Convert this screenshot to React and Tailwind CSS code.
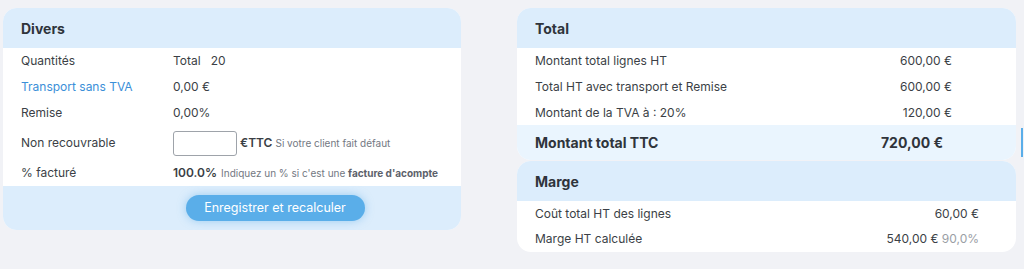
export default function App() {
  const font = { fontFamily: 'Inter, "Noto Sans", sans-serif' };
  return (
    <div className="relative w-[1024px] h-[269px] bg-[#f1f2f6] text-[#3b3f46]" style={font}>
      <div className="flex items-start pt-[8px] pl-[3px] gap-[56px]">
        {/* Divers */}
        <div className="w-[458px] rounded-[14px] overflow-hidden bg-white">
          <div className="h-[40px] bg-[#dcedfc] flex items-center px-[18px] text-[14px] font-bold text-[#2f343b]">Divers</div>
          <div className="flex flex-col text-[12px] px-[18px] whitespace-nowrap">
            <div className="h-[26px] flex items-center">
              <div className="w-[152px]">Quantités</div>
              <div className="flex gap-[10px]"><span>Total</span><span>20</span></div>
            </div>
            <div className="h-[26px] flex items-center">
              <div className="w-[152px] text-[#3b8fd8]">Transport sans TVA</div>
              <div>0,00 €</div>
            </div>
            <div className="h-[26px] flex items-center">
              <div className="w-[152px]">Remise</div>
              <div>0,00%</div>
            </div>
            <div className="h-[34px] flex items-center">
              <div className="w-[152px]">Non recouvrable</div>
              <div className="flex items-center">
                <input className="w-[64px] h-[25px] border border-[#9ea3aa] rounded-[3px] bg-white" />
                <span className="ml-[3px] text-[12px] font-semibold text-[#3b3f46]">€TTC</span>
                <span className="ml-[3px] text-[10px] text-[#737882]">Si votre client fait défaut</span>
              </div>
            </div>
            <div className="h-[26px] flex items-center">
              <div className="w-[152px]">% facturé</div>
              <div className="flex items-center">
                <span className="font-semibold">100.0%</span>
                <span className="ml-[4px] text-[10px] text-[#737882]">Indiquez un % si c'est une <b className="font-bold text-[#5c616a]">facture d'acompte</b></span>
              </div>
            </div>
          </div>
          <div className="h-[44px] bg-[#dcedfc] flex items-center justify-center">
            <button className="w-[179px] h-[26px] rounded-full bg-[#5aaee9] text-white text-[12.5px] shadow-[0_0_8px_rgba(90,174,233,0.5)] ml-[86px]">Enregistrer et recalculer</button>
          </div>
        </div>

        {/* Right column */}
        <div className="w-[499px] flex flex-col gap-[1px]">
          <div className="rounded-[14px] overflow-hidden bg-white">
            <div className="h-[40px] bg-[#dcedfc] flex items-center px-[18px] text-[14px] font-bold text-[#2f343b]">Total</div>
            <div className="flex flex-col text-[12px] pl-[18px] pr-[64px]">
              <div className="h-[26px] flex items-center justify-between"><span>Montant total lignes HT</span><span>600,00 €</span></div>
              <div className="h-[26px] flex items-center justify-between"><span>Total HT avec transport et Remise</span><span>600,00 €</span></div>
              <div className="h-[25px] flex items-center justify-between"><span>Montant de la TVA à : 20%</span><span>120,00 €</span></div>
            </div>
            <div className="h-[35px] bg-[#eaf5fe] flex items-center justify-between pl-[18px] pr-[73px] text-[14px] font-bold text-[#2f343b]">
              <span>Montant total TTC</span><span>720,00 €</span>
            </div>
          </div>
          <div className="rounded-[14px] overflow-hidden bg-white">
            <div className="h-[40px] bg-[#dcedfc] flex items-center px-[18px] text-[14px] font-bold text-[#2f343b]">Marge</div>
            <div className="flex flex-col text-[12px] pl-[18px] pr-[37px]">
              <div className="h-[25px] flex items-center justify-between"><span>Coût total HT des lignes</span><span>60,00 €</span></div>
              <div className="h-[26px] flex items-center justify-between"><span>Marge HT calculée</span><span>540,00 € <span className="text-[#9a9ea5]">90,0%</span></span></div>
            </div>
          </div>
        </div>
      </div>
      <div className="absolute left-[1021px] top-[128px] w-[2px] h-[29px] bg-[#5aaee9]"></div>
    </div>
  );
}
